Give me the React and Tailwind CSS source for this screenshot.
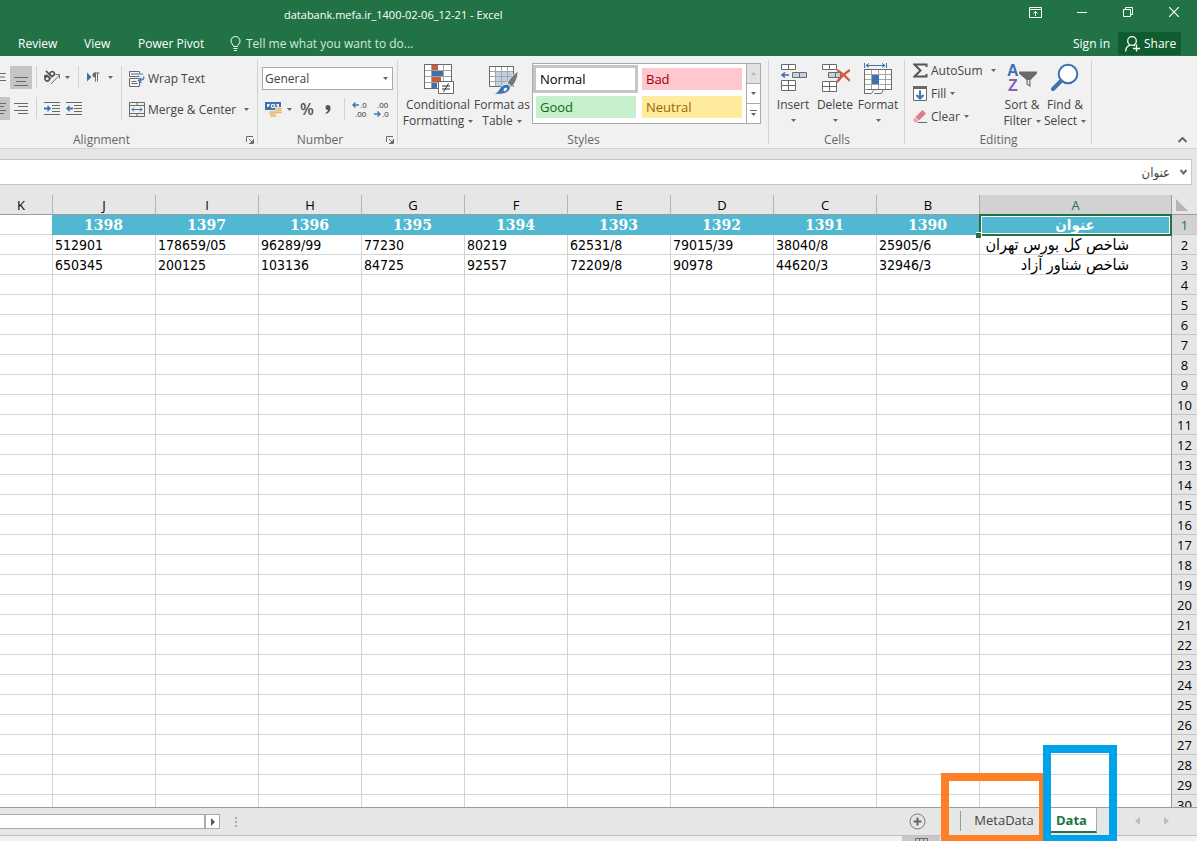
const columns = [
  { name: "B", year: "1390", values: ["25905/6", "32946/3"] },
  { name: "C", year: "1391", values: ["38040/8", "44620/3"] },
  { name: "D", year: "1392", values: ["79015/39", "90978"] },
  { name: "E", year: "1393", values: ["62531/8", "72209/8"] },
  { name: "F", year: "1394", values: ["80219", "92557"] },
  { name: "G", year: "1395", values: ["77230", "84725"] },
  { name: "H", year: "1396", values: ["96289/99", "103136"] },
  { name: "I", year: "1397", values: ["178659/05", "200125"] },
  { name: "J", year: "1398", values: ["512901", "650345"] },
];

const titles = ["شاخص کل بورس تهران", "شاخص شناور آزاد"];

const rows = Array.from({ length: 30 }, (_, i) => i + 1);

function Icon({ w = 16, h = 16, className = "", children }) {
  return (
    <svg
      width={w}
      height={h}
      viewBox={`0 0 ${w} ${h}`}
      fill="none"
      stroke="#6a6a6a"
      className={`shrink-0 ${className}`}
      aria-hidden="true"
    >
      {children}
    </svg>
  );
}

function Caret({ className = "" }) {
  return (
    <Icon w={5} h={3} className={className}>
      <path d="M0 0h5L2.5 3z" fill="#666" stroke="none" />
    </Icon>
  );
}

function Separator({ className = "h-[22px] bg-[#d2d2d2]" }) {
  return <div className={`w-px shrink-0 ${className}`} />;
}

function Launcher() {
  return (
    <button aria-label="More options" className="absolute right-1 bottom-1">
      <Icon w={8} h={8}>
        <path d="M.5 6V.5H7M3 3l3 3M7.5 3v4.5H3" />
        <path d="M7 4v3H4z" fill="#6a6a6a" stroke="none" />
      </Icon>
    </button>
  );
}

function Group({ label, width, launcher, children }) {
  return (
    <section
      className={`relative flex shrink-0 flex-col ${width}`}
      aria-label={label}
    >
      <div className="h-[76px]">{children}</div>
      <div className="pt-px text-center leading-4 text-[#666]">{label}</div>
      <div className="absolute top-1 right-0 h-[84px] w-px bg-[#d2d2d2]" />
      {launcher && <Launcher />}
    </section>
  );
}

function TitleBar() {
  return (
    <div className="flex h-[31px] items-start justify-between">
      <h1 className="pt-[7px] pl-[284px] text-[11px] leading-4 whitespace-nowrap">
        databank.mefa.ir_1400-02-06_12-21 - Excel
      </h1>
      <div className="flex">
        <button aria-label="Ribbon display options" className="flex h-6 w-[46px] items-center justify-center">
          <Icon w={14} h={11}>
            <path d="M.5.5h12v10H.5zM.5 2.5h12M6.5 9V4.500M4.500 6.500l2-2 2 2" stroke="#fff" />
          </Icon>
        </button>
        <button aria-label="Minimize" className="flex h-6 w-[46px] items-center justify-center">
          <Icon w={10} h={10}>
            <path d="M0 5.500h10" stroke="#fff" />
          </Icon>
        </button>
        <button aria-label="Restore" className="flex h-6 w-[46px] items-center justify-center">
          <Icon w={10} h={10}>
            <path d="M.5 2.500h7v7h-7zM2.500 2.500v-2h7v7h-2" stroke="#fff" />
          </Icon>
        </button>
        <button aria-label="Close" className="flex h-6 w-[46px] items-center justify-center">
          <Icon w={10} h={10}>
            <path d="M0 0l10 10M10 0L0 10" stroke="#fff" strokeWidth="1.2" />
          </Icon>
        </button>
      </div>
    </div>
  );
}

function MenuBar() {
  return (
    <div className="flex h-[25px] items-center justify-between pr-4 whitespace-nowrap">
      <nav className="flex items-center pl-[18px]">
        <button className="w-[66px] text-left">Review</button>
        <button className="w-[54px] text-left">View</button>
        <button className="w-[92px] text-left">Power Pivot</button>
        <button className="flex items-center gap-[5px] text-[#d3e8db]">
          <Icon w={11} h={15}>
            <path d="M3.500 10.500c0-2-2.500-2.700-2.500-5.500a4.500 4.500 0 0 1 9 0c0 2.800-2.500 3.500-2.500 5.500zM3.500 12.500h4M4 14.500h3" stroke="#fff" />
          </Icon>
          <span>Tell me what you want to do...</span>
        </button>
      </nav>
      <div className="flex items-center gap-2">
        <a href="#signin">Sign in</a>
        <button className="flex h-[23px] w-[63px] items-center gap-1 bg-[#0f5c2f] pl-[7px]">
          <Icon w={15} h={16}>
            <circle cx="7" cy="5" r="4.300" stroke="#fff" strokeWidth="1.300" />
            <path d="M.7 15.500c0-3.500 2-5.500 4.500-6.300M8.500 9l1.500 1M11.500 8.500v7M8 12.500h7" stroke="#fff" strokeWidth="1.300" />
          </Icon>
          Share
        </button>
      </div>
    </div>
  );
}

function AlignmentGroup() {
  return (
    <Group label="Alignment" width="w-[258px] pr-[55px]" launcher>
      <div className="flex pt-[10px]">
        <div className="w-[121px] shrink-0">
          <div className="flex h-[31px] items-start">
            <button aria-label="Middle align" className="flex h-[22px] w-[10px] items-center">
              <Icon w={6} h={8}>
                <path d="M0 .5h6M0 4h5M0 7.500h6" />
              </Icon>
            </button>
            <button aria-label="Bottom align" className="flex h-[23px] w-[22px] items-end justify-center bg-[#c5c5c5] pb-[3px]">
              <Icon w={14} h={9}>
                <path d="M0 .5h14M2 4.500h10M0 8.500h14" />
              </Icon>
            </button>
            <Separator className="ml-1 h-[22px] bg-[#d2d2d2]" />
            <button aria-label="Orientation" className="ml-[7px] flex h-[22px] w-[27px] items-center gap-[4px]">
              <Icon w={17} h={18}>
                <g transform="rotate(-45 5 9)" stroke="#555" strokeWidth="1.600">
                  <circle cx="2.500" cy="9" r="2.200" />
                  <path d="M4.900 6.500v5M1 6c1-.9 3.700-.9 3.800 1M7.200 2.500v9" />
                  <circle cx="9.500" cy="9" r="2.200" />
                </g>
                <path d="M7 16l8.500-9M11.500 6.500h4V10.500" />
              </Icon>
              <Caret />
            </button>
            <Separator className="ml-[7px] h-[22px] bg-[#d2d2d2]" />
            <button aria-label="Text direction" className="ml-2 flex h-[22px] items-center gap-[7px]">
              <Icon w={14} h={10}>
                <path d="M0 .5v9L4.500 5z" fill="#3b72b0" stroke="none" />
                <path d="M8.500 9.500V1M10.500 9.500V1M7.500 1H12.500" />
                <path d="M9 .5v5H8a2.500 2.500 0 0 1 0-5z" fill="#6a6a6a" stroke="none" />
              </Icon>
              <Caret />
            </button>
          </div>
          <div className="flex h-[23px] items-start">
            <button aria-label="Center" className="flex h-[23px] w-[10px] items-center bg-[#c5c5c5]">
              <Icon w={6} h={11}>
                <path d="M0 .5h6M0 3.500h4M0 7.500h6M0 10.500h4" />
              </Icon>
            </button>
            <button aria-label="Align right" className="flex h-[22px] w-[22px] items-center justify-center">
              <Icon w={14} h={11}>
                <path d="M0 .5h14M4 3.500h10M0 7.500h14M4 10.500h10" />
              </Icon>
            </button>
            <Separator className="ml-1 h-[22px] bg-[#d2d2d2]" />
            <button aria-label="Decrease indent" className="ml-[7px] flex h-[22px] items-center">
              <Icon w={16} h={13}>
                <path d="M0 .5h16M8 3.500h8M8 6.500h8M8 9.500h8M0 12.500h16" />
                <path d="M0 6.500h5" stroke="#3b72b0" strokeWidth="2" />
                <path d="M3.500 3L7 6.500 3.500 10z" fill="#3b72b0" stroke="none" />
              </Icon>
            </button>
            <button aria-label="Increase indent" className="ml-[6px] flex h-[22px] items-center">
              <Icon w={16} h={13}>
                <path d="M0 .5h16M8 3.500h8M8 6.500h8M8 9.500h8M0 12.500h16" />
                <path d="M2 6.500h5" stroke="#3b72b0" strokeWidth="2" />
                <path d="M3.500 3L0 6.500 3.500 10z" fill="#3b72b0" stroke="none" />
              </Icon>
            </button>
          </div>
        </div>
        <Separator className="h-[54px] bg-[#d2d2d2]" />
        <div className="pt-px pl-[7px] whitespace-nowrap">
          <button className="flex h-[23px] items-center gap-[3px]">
            <Icon w={16} h={16}>
              <path d="M10.500 5.500H.5v-5h10v2M10.500 10v5.500H.5v-8h10M2.500 10.500h5M2.500 12.500h6" />
              <path d="M2 3h12M14.500 5.500c1 2-.5 4-4.500 4M12.500 7l-3 2.500 3 2.500" stroke="#3b72b0" strokeWidth="1.200" />
            </Icon>
            Wrap Text
          </button>
          <button className="mt-2 flex h-[23px] w-[120px] items-center gap-[3px]">
            <Icon w={16} h={15}>
              <path d="M.5.5h15v14H.5zM.5 3.500h15M.5 11.500h15M8 .5v3M8 11.500v3" />
              <path d="M3 7.500h10M5 5.500l-2 2 2 2M11 5.500l2 2-2 2" stroke="#3b72b0" />
            </Icon>
            Merge &amp; Center
            <Caret className="ml-auto" />
          </button>
        </div>
      </div>
    </Group>
  );
}

function NumberGroup() {
  return (
    <Group label="Number" width="w-[140px] pr-4" launcher>
      <div className="w-[135px] pt-[11px] pl-1">
        <div className="relative">
          <select
            aria-label="Number format"
            className="block h-[23px] w-full appearance-none border border-[#ababab] bg-white px-[2px] text-[#444]"
          >
            <option>General</option>
          </select>
          <Caret className="pointer-events-none absolute top-[10px] right-[5px]" />
        </div>
        <div className="mt-2 flex h-[22px] items-center pr-[3px]">
          <button aria-label="Accounting format" className="ml-[3px] flex w-[28px] items-center gap-[5px]">
            <Icon w={17} h={16}>
              <path d="M0 1h16v8H0z" fill="#3b72b0" stroke="none" />
              <path d="M2 3h3l-1.500 3H2zM14 3h-3l1.500 3H14z" fill="#eef3f9" stroke="none" />
              <circle cx="8" cy="5" r="2.300" fill="#eef3f9" stroke="none" />
              <circle cx="8" cy="5" r="1" fill="#3b72b0" stroke="none" />
              <path d="M10 6h7v8H4v-5h6z" fill="#f0f0f0" stroke="none" />
              <path d="M11 7.500h5M11 9.500h5M11 11.500h5M5 11h5M5 13h5M6 15h5" stroke="#e8b568" strokeWidth="1.600" strokeLinecap="round" />
            </Icon>
            <Caret />
          </button>
          <button aria-label="Percent style" className="ml-[7px] text-base leading-5 font-semibold text-[#555]">
            %
          </button>
          <button aria-label="Comma style" className="ml-[11px] flex h-5 items-center">
            <Icon w={6} h={9}>
              <path d="M3 0a2.500 2.500 0 0 1 2.500 3C5.500 6 4 8 1 9l-.5-1C2 7 3 6 3 5A2.500 2.500 0 0 1 3 0z" fill="#555" stroke="none" />
            </Icon>
          </button>
          <Separator className="ml-auto h-[22px] bg-[#d2d2d2]" />
          <button aria-label="Increase decimal" className="ml-[7px] font-['Liberation_Sans',sans-serif]">
            <Icon w={16} h={18}>
              <text x="8" y="8" fontSize="8" fill="#333" stroke="none">.0</text>
              <text x="3" y="17" fontSize="8" fill="#333" stroke="none">.00</text>
              <path d="M1 5h6M3.500 2.500L1 5l2.500 2.500" stroke="#3b72b0" strokeWidth="1.300" />
            </Icon>
          </button>
          <button aria-label="Decrease decimal" className="ml-[6px] font-['Liberation_Sans',sans-serif]">
            <Icon w={16} h={18}>
              <text x="3" y="8" fontSize="8" fill="#333" stroke="none">.00</text>
              <text x="8" y="17" fontSize="8" fill="#333" stroke="none">.0</text>
              <path d="M0 14h6M3.500 11.500L6 14l-2.500 2.500" stroke="#3b72b0" strokeWidth="1.300" />
            </Icon>
          </button>
        </div>
      </div>
    </Group>
  );
}

function StylesGroup() {
  return (
    <Group label="Styles" width="w-[371px]">
      <div className="flex pt-[7px] pl-[3px]">
        <button className="flex w-[74px] shrink-0 flex-col items-center leading-4 whitespace-nowrap">
          <Icon w={31} h={33}>
            <path d="M1.500 1.500h27v24h-27z" fill="#fff" />
            <path d="M9 2h6v5H9zM9 13h9v6H9z" fill="#d0583c" stroke="none" />
            <path d="M9 8h11v5H9zM9 19h5v6H9z" fill="#3b72b0" stroke="none" />
            <path d="M1.500 7.500h27M1.500 13.500h27M1.500 19.500h27M8.500 1.500v24M20.500 1.500v24" stroke="#a5a5a5" />
            <path d="M1.500 1.500h27v24h-27z" />
            <path d="M15.500 18.500h15v12h-15z" fill="#fff" />
            <path d="M19 23h8M19 26h8M25.500 20.500l-5 8.500" stroke="#333" />
          </Icon>
          <span className="mt-px">Conditional</span>
          <span className="flex items-center gap-1">
            Formatting <Caret />
          </span>
        </button>
        <button className="flex w-[54px] shrink-0 flex-col items-center leading-4 whitespace-nowrap">
          <Icon w={31} h={33}>
            <path d="M2.500 3.500h24v20h-24z" fill="#fff" />
            <path d="M9 9h17v15H9z" fill="#bfd1e6" stroke="none" />
            <path d="M2.500 8.500h24M2.500 13.500h24M2.500 18.500h24M8.500 3.500v20M14.500 3.500v20M20.500 3.500v20" stroke="#a5a5a5" />
            <path d="M2.500 3.500h24v20h-24z" />
            <path d="M31 8c-4 3-9 8-11 12l5 4c3-4 6-9 6-15z" fill="#777" stroke="#f0f0f0" />
            <path d="M18 21.500c4-1 6 2 5 4.500C21 30.500 15 32 7 31c4-2 4-3 6-6 1-2 3-3 5-3.500z" fill="#3b72b0" stroke="#f0f0f0" />
            <path d="M17 25.500c1-1 3-1 3 .5s-2 2.500-3.500 2" fill="#fff" stroke="none" />
          </Icon>
          <span className="mt-px">Format as</span>
          <span className="flex items-center gap-1">
            Table <Caret />
          </span>
        </button>
        <div className="ml-[3px] flex h-[61px] w-[229px] border border-[#ababab] bg-white">
          <div className="grid flex-1 grid-cols-[105fr_100fr] grid-rows-[28px_28px] gap-x-1 pt-px pr-1 text-[13px] leading-4">
            <button className="border-[3px] border-[#c5c5c5] bg-white px-1 text-left text-black">Normal</button>
            <button className="my-[3px] bg-[#ffc7ce] px-1 text-left text-[#9c0006]">Bad</button>
            <button className="my-[3px] mr-[2px] ml-[3px] bg-[#c6efce] px-1 text-left text-[#0f6a0f]">Good</button>
            <button className="my-[3px] bg-[#ffeb9c] px-1 text-left text-[#9c6500]">Neutral</button>
          </div>
          <div className="flex w-[14px] flex-col border-l border-[#ababab]">
            <button aria-label="Previous styles" className="flex flex-1 items-center justify-center bg-[#e1e1e1]">
              <Icon w={5} h={3}>
                <path d="M0 3h5L2.500 0z" fill="#b5b5b5" stroke="none" />
              </Icon>
            </button>
            <button aria-label="Next styles" className="flex flex-1 items-center justify-center border-t border-[#ababab]">
              <Caret />
            </button>
            <button aria-label="All styles" className="flex flex-1 items-center justify-center border-t border-[#ababab]">
              <Icon w={7} h={7}>
                <path d="M0 .5h7" />
                <path d="M1 3h5L3.500 6z" fill="#666" stroke="none" />
              </Icon>
            </button>
          </div>
        </div>
      </div>
    </Group>
  );
}

function CellsGroup() {
  return (
    <Group label="Cells" width="w-[136px]">
      <div className="flex pt-[7px] pl-[3px]">
        <button className="flex w-[42px] flex-col items-center leading-4">
          <Icon w={27} h={33}>
            <path d="M1.500 1.500h14v5h-14zM8.500 1.500v5M1.500 17.500h14v10h-14zM8.500 17.500v10M1.500 22.500h14" fill="#fff" />
            <path d="M12.500 9.500h14v5h-14zM19.500 9.500v5" fill="#c3d3e5" />
            <path d="M2 12h7M5 9.500L2 12l3 2.500" stroke="#3b72b0" strokeWidth="1.600" />
          </Icon>
          <span className="mt-px">Insert</span>
          <Caret className="mt-[6px]" />
        </button>
        <button className="flex w-[42px] flex-col items-center leading-4">
          <Icon w={30} h={33}>
            <path d="M2.500 1.500h14v5h-14zM9.500 1.500v5M2.500 18.500h14v10h-14zM9.500 18.500v10M2.500 23.500h14" fill="#fff" />
            <path d="M8.500 9.500h12v5h-12zM15.500 9.500v5" fill="#c3d3e5" />
            <path d="M17 7c4 2 9 7 13 11M30 7c-5 3-10 8-13 12" stroke="#d0583c" strokeWidth="2.200" />
          </Icon>
          <span className="mt-px">Delete</span>
          <Caret className="mt-[6px]" />
        </button>
        <button className="flex w-[44px] flex-col items-center leading-4">
          <Icon w={29} h={33}>
            <path d="M.5 6.500h27v20H.5z" fill="#fff" />
            <path d="M.5 11.500h27M.5 21.500h27M7.500 6.500v20M14.500 6.500v20M21.500 6.500v20M.5 16.500h27" stroke="#a5a5a5" />
            <path d="M.5 6.500h27v20H.5z" />
            <path d="M8 12h7v9H8z" fill="#3b72b0" stroke="none" />
            <path d="M.5 26.500v4h7l2-3M10.500 30.500h7l2-4" fill="#fff" />
            <path d="M.5 0v5M22.500 0v5M2 2.500h19M5 .5l-3 2 3 2M18 .5l3 2-3 2" stroke="#3b72b0" />
          </Icon>
          <span className="mt-px">Format</span>
          <Caret className="mt-[6px]" />
        </button>
      </div>
    </Group>
  );
}

function EditingGroup() {
  return (
    <Group label="Editing" width="w-[187px]">
      <div className="flex whitespace-nowrap">
        <div className="w-[94px] shrink-0 pt-[3px] pl-2">
          <button className="flex h-[23px] w-[83px] items-center gap-[3px]">
            <Icon w={15} h={15}>
              <path d="M13.500 4V1.500H1.500l6 6-6 6h12V11" stroke="#555" strokeWidth="2" />
            </Icon>
            AutoSum
            <Caret className="ml-auto" />
          </button>
          <button className="flex h-[23px] items-center gap-1">
            <Icon w={14} h={15}>
              <path d="M.5.5h13v14H.5z" fill="#fff" />
              <path d="M0 0h14v3H0z" fill="#6a6a6a" stroke="none" />
              <path d="M7 4.500v8M3.500 9L7 12.500 10.500 9" stroke="#3b72b0" strokeWidth="2" />
            </Icon>
            Fill <Caret />
          </button>
          <button className="flex h-[23px] items-center gap-1">
            <Icon w={14} h={14}>
              <path d="M9.500 0L13 3.500 6 10.500 2.500 7z" fill="#e07a8d" stroke="none" />
              <path d="M2 7.500L5.500 11 4 12.500H2L.5 11V9z" fill="#f0a0ae" stroke="none" />
              <path d="M5 12.500h9" />
            </Icon>
            Clear <Caret />
          </button>
        </div>
        <button className="flex w-[46px] flex-col items-center pt-[7px] leading-4">
          <Icon w={31} h={33} className="font-['Liberation_Sans',sans-serif]">
            <text x="0" y="13" fontSize="16" fontWeight="bold" fill="#3b72b0" stroke="none">A</text>
            <text x="1" y="28" fontSize="16" fontWeight="bold" fill="#8e5fb0" stroke="none">Z</text>
            <path d="M12 8.500h18v2L23.500 17v7l-4-2.500V17L12 10.500z" fill="#6a6a6a" stroke="none" />
            <path d="M21.500 17v4.500" stroke="#f0f0f0" strokeWidth="1.600" />
          </Icon>
          <span className="mt-px">Sort &amp;</span>
          <span className="flex items-center gap-1">
            Filter <Caret />
          </span>
        </button>
        <button className="flex w-10 flex-col items-center pt-[7px] leading-4">
          <Icon w={28} h={33}>
            <circle cx="17" cy="11" r="9.300" fill="#fff" stroke="#3b72b0" strokeWidth="2" />
            <path d="M10 18l-8 8" stroke="#3b72b0" strokeWidth="4" strokeLinecap="round" />
          </Icon>
          <span className="mt-px">Find &amp;</span>
          <span className="flex items-center gap-1">
            Select <Caret />
          </span>
        </button>
      </div>
    </Group>
  );
}

function Ribbon() {
  return (
    <div className="flex h-[93px] shrink-0 border-b border-[#d2d2d2] bg-[#f1f1f1] text-[#444]">
      <AlignmentGroup />
      <NumberGroup />
      <StylesGroup />
      <CellsGroup />
      <EditingGroup />
      <button aria-label="Collapse the ribbon" className="mr-[10px] mb-[5px] ml-auto self-end">
        <Icon w={9} h={6}>
          <path d="M.5 5l4-4 4 4" strokeWidth="2" />
        </Icon>
      </button>
    </div>
  );
}

function FormulaBar() {
  return (
    <div className="shrink-0 py-[10px] pr-[5px]">
      <div className="flex h-[26px] items-center border border-l-0 border-[#c6c6c6] bg-white pr-1">
        <input
          dir="rtl"
          aria-label="Formula bar"
          defaultValue="عنوان"
          className="h-full min-w-0 flex-1 bg-transparent pr-[10px] font-['DejaVu_Sans_Condensed','DejaVu_Sans',sans-serif] text-[13px] text-[#444] outline-none"
        />
        <button aria-label="Expand formula bar">
          <Icon w={7} h={6}>
            <path d="M.5 1l3 3.500 3-3.500" strokeWidth="2" />
          </Icon>
        </button>
      </div>
    </div>
  );
}

function Sheet() {
  return (
    <div className="min-h-0 flex-1 overflow-hidden bg-white">
      <table
        dir="rtl"
        className="w-full table-fixed border-separate border-spacing-0 font-['DejaVu_Sans_Condensed','DejaVu_Sans',sans-serif] text-sm leading-[17px] text-black"
      >
        <colgroup>
          <col className="w-[26px]" />
          <col className="w-[192px]" />
          {columns.map((c) => (
            <col key={c.name} className="w-[103px]" />
          ))}
          <col />
        </colgroup>
        <thead className="font-['Open_Sans','Noto_Sans',sans-serif] text-[13px]">
          <tr className="h-5">
            <th className="border-b border-l border-[#9b9b9b] bg-[#e6e6e6] p-0">
              <Icon w={12} h={12} className="mr-[9px]">
                <path d="M0 0v12h12z" fill="#b4b4b4" stroke="none" />
              </Icon>
            </th>
            <th className="border-b border-l border-b-[#217346] border-l-[#ababab] bg-[#d2d2d2] p-0 pt-[2px] font-normal text-[#217346]">A</th>
            {columns.map((c) => (
              <th key={c.name} className="border-b border-l border-b-[#9b9b9b] border-l-[#b5b5b5] bg-[#e6e6e6] p-0 pt-[2px] font-normal">
                {c.name}
              </th>
            ))}
            <th className="border-b border-[#9b9b9b] bg-[#e6e6e6] p-0 pt-[2px] pr-[10px] font-normal">K</th>
          </tr>
        </thead>
        <tbody>
          {rows.map((n) => (
            <tr key={n} className="h-5">
              <th
                className={`border-b border-l border-b-[#c6c6c6] border-l-[#9b9b9b] p-0 pt-[2px] font-['Open_Sans','Noto_Sans',sans-serif] text-[13px] font-normal ${
                  n === 1 ? "bg-[#d2d2d2] text-[#217346]" : "bg-[#e6e6e6]"
                }`}
              >
                {n}
              </th>
              {n === 1 ? (
                <td className="relative bg-[#50b9d1] p-0 text-center text-[15px] leading-[17px] font-bold text-white">
                  عنوان
                  <div className="pointer-events-none absolute -top-px -right-px -bottom-px left-0 border-2 border-[#217346]">
                    <div className="h-full border border-white" />
                  </div>
                  <div className="absolute -bottom-[3px] -left-[3px] size-[6px] border-t border-r border-white bg-[#217346]" />
                </td>
              ) : (
                <td className="border-b border-l border-[#d4d4d4] p-0 pr-[42px] text-base leading-[17px] whitespace-nowrap">
                  {titles[n - 2]}
                </td>
              )}
              {columns.map((c) =>
                n === 1 ? (
                  <td
                    key={c.name}
                    className="bg-[#50b9d1] p-0 text-center font-['DejaVu_Serif',serif] font-bold text-white"
                  >
                    {c.year}
                  </td>
                ) : (
                  <td key={c.name} dir="ltr" className="border-b border-l border-[#d4d4d4] p-0 pt-[2px] pl-[3px] text-left">
                    {c.values[n - 2]}
                  </td>
                )
              )}
              <td className="border-b border-[#d4d4d4] p-0" />
            </tr>
          ))}
        </tbody>
      </table>
    </div>
  );
}

function Footer() {
  return (
    <footer className="relative shrink-0">
      <div className="flex h-7 justify-between border-t border-[#9b9b9b] bg-[#e6e6e6]">
        <div className="flex items-center">
          <div className="h-[15px] w-[206px] border-y border-r-2 border-[#ababab] bg-white" />
          <button aria-label="Scroll right" className="flex h-[15px] w-[14px] items-center justify-center border border-l-0 border-[#ababab] bg-white">
            <Icon w={4} h={8}>
              <path d="M0 0v8l4-4z" fill="#555" stroke="none" />
            </Icon>
          </button>
          <Icon w={2} h={10} className="ml-[15px]">
            <path d="M0 0h2v2H0zM0 4h2v2H0zM0 8h2v2H0z" fill="#ababab" stroke="none" />
          </Icon>
        </div>
        <div className="flex items-center pr-[28px] pb-px text-[#444]">
          <button aria-label="New sheet" className="mr-[34px]">
            <Icon w={17} h={17}>
              <circle cx="8.500" cy="8.500" r="7.500" stroke="#777" />
              <path d="M4.500 8.500h8M8.500 4.500v8" stroke="#666" strokeWidth="2" />
            </Icon>
          </button>
          <Separator className="h-5 bg-[#9b9b9b]" />
          <button className="w-[90px] pr-1 text-center text-[13px]">MetaData</button>
          <button className="flex h-[25px] w-[46px] items-center justify-center self-start border-r border-b-2 border-r-[#ababab] border-b-[#217346] bg-white pt-[2px] pr-1 text-[13px] font-bold text-[#217346]">
            Data
          </button>
          <button aria-label="Previous sheet" className="ml-[38px]">
            <Icon w={5} h={8}>
              <path d="M5 0v8L0 4z" fill="#bdbdbd" stroke="none" />
            </Icon>
          </button>
          <button aria-label="Next sheet" className="ml-6">
            <Icon w={5} h={8}>
              <path d="M0 0v8l5-4z" fill="#bdbdbd" stroke="none" />
            </Icon>
          </button>
        </div>
      </div>
      <div className="flex h-[6px] justify-end border-t border-[#c0c0c0] bg-[#f1f1f1] pr-[257px]">
        <div className="flex w-[38px] justify-center overflow-hidden bg-[#c8c8c8] pt-[2px]">
          <Icon w={13} h={8}>
            <path d="M.5.5h12v8H.5zM.5 3.500h12M4.500.5v8M8.500.5v8" />
          </Icon>
        </div>
      </div>

      {/* Sheet tab highlights */}
      <div className="pointer-events-none absolute right-[150px] bottom-0 h-[68px] w-[106px] border-[8px] border-b-[6px] border-[#ff7f27]" />
      <div className="pointer-events-none absolute right-20 bottom-0 h-24 w-[74px] border-[8px] border-b-[6px] border-[#00a2e8]" />
    </footer>
  );
}

export default function App() {
  return (
    <div className="flex h-screen flex-col overflow-hidden bg-[#e6e6e6] font-['Open_Sans','Noto_Sans',sans-serif] text-xs">
      <header className="h-14 shrink-0 bg-[#217346] text-white">
        <TitleBar />
        <MenuBar />
      </header>
      <Ribbon />
      <FormulaBar />
      <Sheet />
      <Footer />
    </div>
  );
}
